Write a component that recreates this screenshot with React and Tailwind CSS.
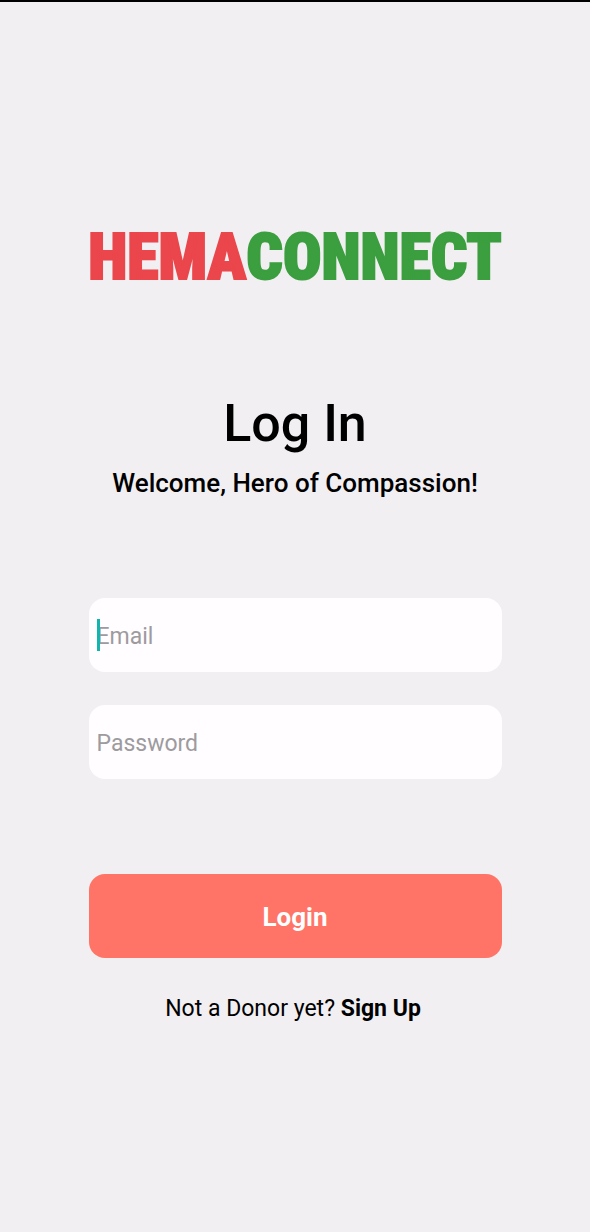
const inputClass =
  "block h-[74px] w-full rounded-2xl bg-[#fffdff] px-2 pt-0.5 text-[23px] caret-[#12b5ad] outline-none placeholder:text-[#9d9b9e]";

export default function App() {
  return (
    <main className="min-h-screen border-t-2 border-black bg-[#f1eff2] px-[15%] pb-12 text-center font-['Roboto',sans-serif] text-black">
      <div className="flex justify-center pt-[218px] font-['Roboto_Condensed','Open_Sans_Condensed',sans-serif] text-[64px] leading-[76px] font-black">
        <span className="text-[#ea464b] [-webkit-text-stroke:2px_#ea464b]">HEMA</span>
        <span className="text-[#3b9e3f] [-webkit-text-stroke:2px_#3b9e3f]">CONNECT</span>
      </div>
      <h1 className="mt-24 text-[52px] leading-[64px] font-medium">Log In</h1>
      <p className="mt-[11px] text-[26px] leading-8 font-medium whitespace-nowrap">Welcome, Hero of Compassion!</p>
      <form className="mt-[99px]" onSubmit={(e) => e.preventDefault()}>
        <div className="relative">
          <input aria-label="Email" type="email" placeholder="Email" className={inputClass} />
          <span aria-hidden="true" className="absolute top-[21px] left-2 h-8 w-[3px] bg-[#12b5ad]" />
        </div>
        <input aria-label="Password" type="password" placeholder="Password" className={`mt-[33px] ${inputClass}`} />
        <button className="mt-[95px] h-[84px] w-full rounded-2xl bg-[#ff7466] pt-0.5 text-[26px] font-bold text-white">Login</button>
      </form>
      <p className="mt-[35px] pr-1 text-[23px] leading-8">Not a Donor yet? <a href="#signup" className="font-bold">Sign Up</a></p>
    </main>
  );
}
